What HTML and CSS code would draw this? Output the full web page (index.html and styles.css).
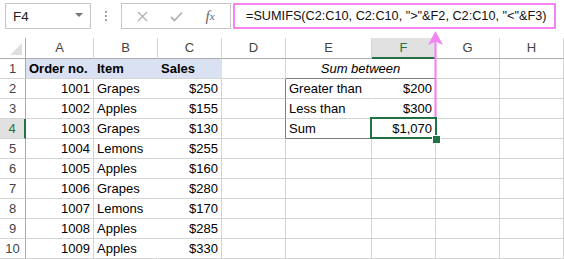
FILE: index.html
```html
<!DOCTYPE html>
<html lang="en">
<head>
    <meta charset="UTF-8">
    <meta name="viewport" content="width=device-width, initial-scale=1.0">
    <title>SUMIFS between</title>
    <link rel="stylesheet" href="styles.css">
</head>
<body>
    <div class="page">
        <!-- formula bar -->
        <div class="toolbar">
            <div class="name-box"><span>F4</span><span class="caret"></span></div>
            <div class="grip"><i></i><i></i><i></i></div>
            <div class="fx-buttons">
                <span class="slot">
                    <svg width="11" height="11" viewBox="0 0 11 11"><path d="M1 1L10 10M10 1L1 10" stroke="#b3b3b3" stroke-width="1.4" fill="none"/></svg>
                </span>
                <span class="slot">
                    <svg width="13" height="11" viewBox="0 0 13 11"><path d="M1 6L4.5 9.5L12 1.5" stroke="#b3b3b3" stroke-width="1.8" fill="none"/></svg>
                </span>
                <span class="slot fx">f<small>x</small></span>
            </div>
            <div class="formula">=SUMIFS(C2:C10, C2:C10, "&gt;"&amp;F2, C2:C10, "&lt;"&amp;F3)</div>
        </div>

        <!-- sheet -->
        <div class="grid">
            <div class="corner"><span></span></div>
            <div class="hd">A</div>
            <div class="hd">B</div>
            <div class="hd">C</div>
            <div class="hd">D</div>
            <div class="hd">E</div>
            <div class="hd hd-sel">F</div>
            <div class="hd">G</div>
            <div class="hd">H</div>

            <div class="rh">1</div>
            <div class="c blue b">Order no.</div>
            <div class="c blue b">Item</div>
            <div class="c blue b">Sales</div>
            <div class="c"></div>
            <div class="c title">Sum between</div>
            <div class="c"></div>
            <div class="c"></div>

            <div class="rh">2</div>
            <div class="c num">1001</div>
            <div class="c nb">Grapes</div>
            <div class="c num">$250</div>
            <div class="c box-l"></div>
            <div class="c nb">Greater than</div>
            <div class="c num">$200</div>
            <div class="c"></div>
            <div class="c"></div>

            <div class="rh">3</div>
            <div class="c num">1002</div>
            <div class="c nb">Apples</div>
            <div class="c num">$155</div>
            <div class="c box-l"></div>
            <div class="c nb">Less than</div>
            <div class="c num">$300</div>
            <div class="c"></div>
            <div class="c"></div>

            <div class="rh rh-sel">4</div>
            <div class="c num">1003</div>
            <div class="c nb">Grapes</div>
            <div class="c num">$130</div>
            <div class="c box-l"></div>
            <div class="c nb box-b">Sum</div>
            <div class="c num sel">$1,070</div>
            <div class="c"></div>
            <div class="c"></div>

            <div class="rh">5</div>
            <div class="c num">1004</div>
            <div class="c nb">Lemons</div>
            <div class="c num">$255</div>
            <div class="c"></div>
            <div class="c"></div>
            <div class="c"></div>
            <div class="c"></div>
            <div class="c"></div>

            <div class="rh">6</div>
            <div class="c num">1005</div>
            <div class="c nb">Apples</div>
            <div class="c num">$160</div>
            <div class="c"></div>
            <div class="c"></div>
            <div class="c"></div>
            <div class="c"></div>
            <div class="c"></div>

            <div class="rh">7</div>
            <div class="c num">1006</div>
            <div class="c nb">Grapes</div>
            <div class="c num">$280</div>
            <div class="c"></div>
            <div class="c"></div>
            <div class="c"></div>
            <div class="c"></div>
            <div class="c"></div>

            <div class="rh">8</div>
            <div class="c num">1007</div>
            <div class="c nb">Lemons</div>
            <div class="c num">$170</div>
            <div class="c"></div>
            <div class="c"></div>
            <div class="c"></div>
            <div class="c"></div>
            <div class="c"></div>

            <div class="rh">9</div>
            <div class="c num">1008</div>
            <div class="c nb">Apples</div>
            <div class="c num">$285</div>
            <div class="c"></div>
            <div class="c"></div>
            <div class="c"></div>
            <div class="c"></div>
            <div class="c"></div>

            <div class="rh">10</div>
            <div class="c num">1009</div>
            <div class="c nb">Apples</div>
            <div class="c num">$330</div>
            <div class="c"></div>
            <div class="c"></div>
            <div class="c"></div>
            <div class="c"></div>
            <div class="c"></div>
        </div>

        <!-- pink pointer from the formula to F4 -->
        <svg class="pointer" width="20" height="92" viewBox="0 0 20 92">
            <path d="M9.5 10V89" stroke="#f285f2" stroke-width="2.2" fill="none"/>
            <path d="M9.5 3L17 17L9.5 13.5L2 17Z" fill="#f285f2"/>
        </svg>
    </div>
</body>
</html>
```

FILE: styles.css
```css
*{
    box-sizing: border-box;
}
body{
    margin: 0;
    background: #fff;
    font-family: "Liberation Sans", Arial, sans-serif;
    font-size: 13px;
    color: #000;
}
.page{
    position: relative;
    width: 564px;
    height: 259px;
    overflow: hidden;
}

/* formula bar */
.toolbar{
    display: flex;
    align-items: flex-start;
    height: 38px;
    padding: 3px 0 0 5px;
}
.name-box{
    display: flex;
    align-items: center;
    justify-content: space-between;
    width: 86px;
    height: 26px;
    padding: 0 7px 0 7px;
    border: 1px solid #c6c6c6;
    color: #222;
    font-size: 13.5px;
}
.caret{
    width: 0;
    height: 0;
    border-left: 4px solid transparent;
    border-right: 4px solid transparent;
    border-top: 4px solid #777;
    margin-top: -2px;
}
.grip{
    display: flex;
    flex-direction: column;
    gap: 2px;
    margin: 8px 0 0 14px;
}
.grip i{
    display: block;
    width: 2px;
    height: 2px;
    background: #a6a6a6;
}
.fx-buttons{
    display: flex;
    align-items: center;
    width: 110px;
    height: 26px;
    margin-left: 14px;
    padding-left: 3px;
    border: 1px solid #c6c6c6;
}
.slot{
    display: flex;
    align-items: center;
    justify-content: center;
    width: 34px;
}
.fx{
    font-family: "Liberation Serif", serif;
    font-style: italic;
    font-size: 15px;
    color: #666;
}
.fx small{
    font-size: 11px;
}
.formula{
    display: flex;
    align-items: center;
    width: 323px;
    height: 26px;
    margin-left: 2px;
    padding-left: 11px;
    border: 2px solid #f285f2;
    font-size: 12.7px;
    color: #111;
    white-space: nowrap;
}

/* sheet */
.grid{
    display: grid;
    grid-template-columns: 26px 68px 64px 64px 64px 86px 64px 64px 64px;
    grid-template-rows: 21px repeat(10, 20px);
}
.corner{
    position: relative;
    border-right: 1px solid #ababab;
    border-bottom: 1px solid #ababab;
}
.corner span{
    position: absolute;
    right: 3px;
    bottom: 3px;
    width: 0;
    height: 0;
    border-left: 12px solid transparent;
    border-bottom: 12px solid #dfdfdf;
}
.hd{
    text-align: center;
    line-height: 20px;
    color: #444;
    border-right: 1px solid #d4d4d4;
    border-bottom: 1px solid #ababab;
}
.hd-sel{
    background: #e1e1e1;
    color: #217346;
    border-bottom: 2px solid #217346;
    line-height: 19px;
}
.rh{
    text-align: center;
    line-height: 19px;
    color: #444;
    border-right: 1px solid #ababab;
    border-bottom: 1px solid #d4d4d4;
}
.rh-sel{
    background: #e1e1e1;
    color: #217346;
    border-right: 2px solid #217346;
}
.c{
    padding: 0 3px;
    line-height: 19px;
    white-space: nowrap;
    border-right: 1px solid #d4d4d4;
    border-bottom: 1px solid #d4d4d4;
}
.num{
    text-align: right;
}
.b{
    font-weight: bold;
}
.blue{
    background: #d9e1f2;
    border-right-color: transparent;
}
.nb{
    border-right-color: transparent;
}
.title{
    grid-column: span 2;
    text-align: center;
    font-style: italic;
    border-bottom-color: #7f7f7f;
}
.box-l{
    border-right-color: #7f7f7f;
}
.box-b{
    border-bottom-color: #7f7f7f;
}
.sel{
    position: relative;
}
.sel::after{
    content: "";
    position: absolute;
    left: -2px;
    top: -2px;
    right: -2px;
    bottom: -1px;
    border: 2px solid #217346;
}
.sel::before{
    content: "";
    position: absolute;
    left: 60px;
    top: 16px;
    width: 7px;
    height: 7px;
    background: #217346;
    border: 1px solid #fff;
    z-index: 1;
}

.pointer{
    position: absolute;
    left: 426px;
    top: 28px;
}
```
